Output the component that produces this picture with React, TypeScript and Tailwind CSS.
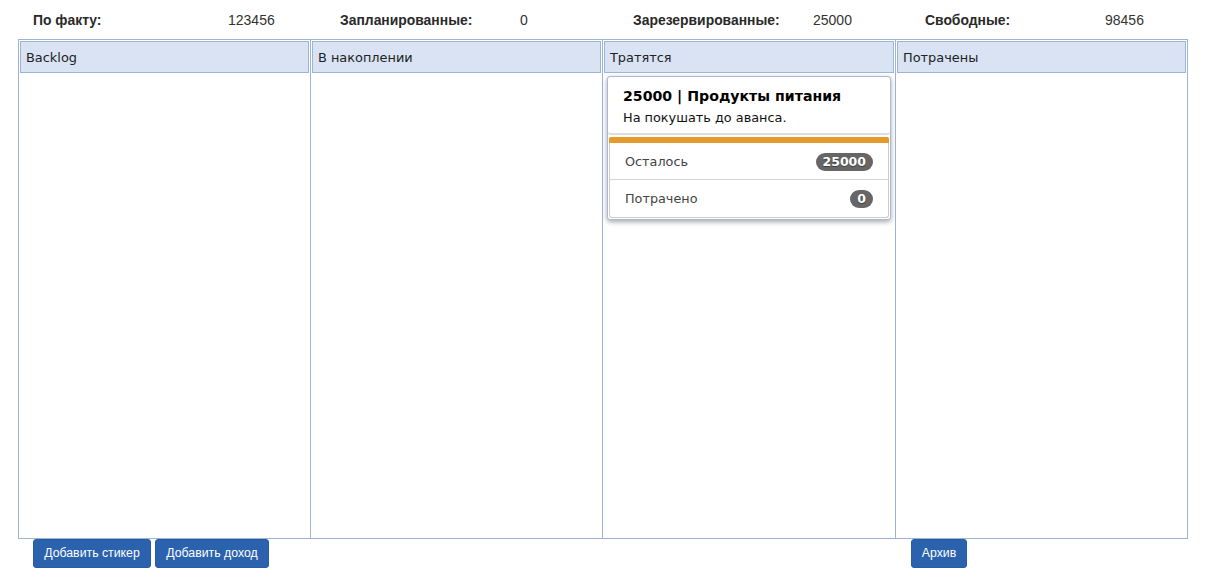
import React from "react";

const sans = "font-['Liberation_Sans',Arial,sans-serif]";
const verdana = "font-['DejaVu_Sans',Verdana,sans-serif]";

function Stat({ label, value, cls, labelCls }: { label: string; value: string; cls: string; labelCls: string }) {
  return (
    <div className={`flex text-[14px] leading-[20px] text-[#333] ${cls}`}>
      <div className={`font-bold text-[13.9px] text-[#2a2a2a] ${labelCls}`}>{label}</div>
      <div>{value}</div>
    </div>
  );
}

function Column({ title, cls, children }: { title: string; cls: string; children?: React.ReactNode }) {
  return (
    <div className={`min-w-0 p-px ${cls}`}>
      <div className="h-[32px] bg-[#d9e3f4] border border-[#9db4d2] pl-[5px] text-[12.9px] leading-[32px] text-[#222]">
        {title}
      </div>
      {children}
    </div>
  );
}

function Badge({ children }: { children: React.ReactNode }) {
  return (
    <span className="rounded-[10px] bg-[#666] px-[7px] h-[18px] text-[12.5px] font-bold leading-[18px] text-white [text-shadow:0_1px_1px_rgba(0,0,0,0.4)]">
      {children}
    </span>
  );
}

function Btn({ children, cls }: { children: React.ReactNode; cls: string }) {
  return (
    <button className={`h-[29px] rounded-[3px] border border-[#285e9f] bg-[#2b62ad] text-[12.3px] text-white leading-[27px] text-center ${sans} ${cls}`}>
      {children}
    </button>
  );
}

export default function App() {
  return (
    <div className={`w-[1212px] h-[582px] bg-white overflow-hidden ${sans}`}>
      <div className="flex pl-[33px] pt-[10px] h-[39px]">
        <Stat label="По факту:" value="123456" cls="w-[307px]" labelCls="w-[195px]" />
        <Stat label="Запланированные:" value="0" cls="w-[293px]" labelCls="w-[180px]" />
        <Stat label="Зарезервированные:" value="25000" cls="w-[292px]" labelCls="w-[180px]" />
        <Stat label="Свободные:" value="98456" cls="w-[250px]" labelCls="w-[180px]" />
      </div>
      <div className={`ml-[18px] w-[1170px] h-[500px] border border-[#9db4d2] flex ${verdana}`}>
        <Column title="Backlog" cls="w-[292px] border-r border-[#9db4d2]" />
        <Column title="В накоплении" cls="w-[292px] border-r border-[#9db4d2]" />
        <Column title="Тратятся" cls="w-[293px] border-r border-[#9db4d2]">
          <div className="mx-[3px] mt-[3px] h-[144px] rounded-[3px] border border-[#a9bbd2] shadow-[0_2px_5px_rgba(0,0,0,0.35)] bg-white flex flex-col">
            <div className="h-[58px] shrink-0 rounded-[3px] border-b-2 border-[#ddd] px-[15px] pt-[10px]">
              <div className="text-[14.15px] font-bold leading-[18px] text-black">25000 | Продукты питания</div>
              <div className="text-[12.85px] leading-[18px] mt-[4px] text-[#111]">На покушать до аванса.</div>
            </div>
            <div className="mx-[1px] mt-[2px] mb-[1px] flex-1 flex flex-col rounded-[3px] border-x border-b border-[#ccc] text-[12.8px] text-[#444]">
              <div className="h-[6px] shrink-0 bg-[#e69a2b] rounded-t-[2px] -mx-px" />
              <div className="h-[37px] shrink-0 flex items-center justify-between px-[15px] pt-[1px] border-b border-[#d5d5d5]">
                <span>Осталось</span>
                <Badge>25000</Badge>
              </div>
              <div className="flex-1 flex items-center justify-between px-[15px]">
                <span>Потрачено</span>
                <Badge>0</Badge>
              </div>
            </div>
          </div>
        </Column>
        <Column title="Потрачены" cls="flex-1" />
      </div>
      <div className="flex pl-[33px]">
        <div className="flex gap-[4px] w-[878px]">
          <Btn cls="w-[118px]">Добавить стикер</Btn>
          <Btn cls="w-[114px]">Добавить доход</Btn>
        </div>
        <Btn cls="w-[56px]">Архив</Btn>
      </div>
    </div>
  );
}
